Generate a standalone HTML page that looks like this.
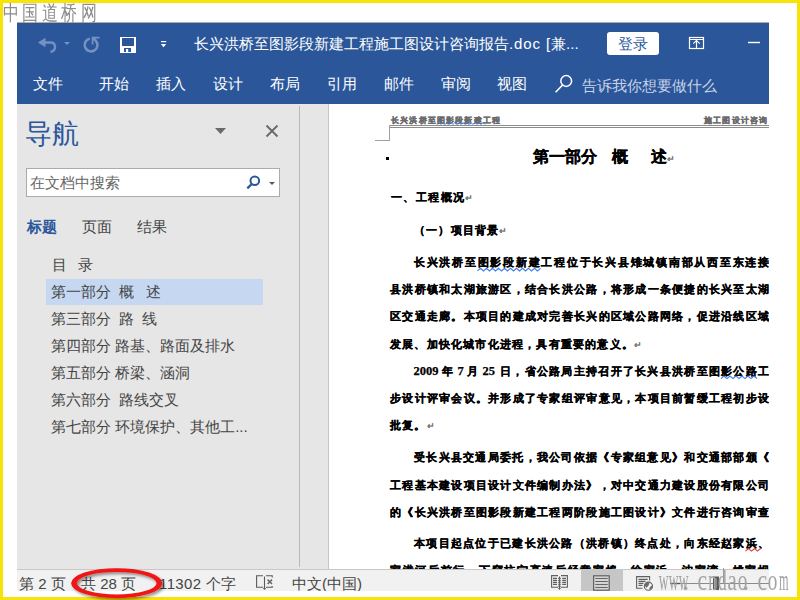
<!DOCTYPE html>
<html><head><meta charset="utf-8">
<style>
*{margin:0;padding:0;box-sizing:border-box}
html,body{width:800px;height:600px;overflow:hidden;background:#fff}
body{position:relative;font-family:"Liberation Sans",sans-serif}
.a{position:absolute;white-space:nowrap}
#yb{position:absolute;left:0;top:0;width:800px;height:600px;border:3px solid #f9e207;z-index:1}
#win{position:absolute;left:17px;top:22px;width:752px;height:569px;overflow:hidden;background:#e6e6e6}
#title{position:absolute;left:0;top:0;width:752px;height:82px;background:#2b579a}
.tb{color:#fff;font-size:15px;line-height:15px;top:54px}
.nav{color:#444;font-size:15px;line-height:15px}
#page{position:absolute;left:312px;top:82px;width:440px;height:465px;background:#fff;overflow:hidden}
.p{position:absolute;white-space:nowrap;font-family:"Liberation Serif",serif;font-weight:bold;font-size:11px;line-height:12px;color:#000;-webkit-text-stroke:0.25px #000}
#status{position:absolute;left:0;top:547px;width:752px;height:22px;background:#f1f1f1;border-top:1px solid #c8c8c8}
.st{color:#444;font-size:15px;line-height:15px;top:6px}
.hd{font-size:8px;line-height:9px;letter-spacing:1.17px;font-weight:bold;color:#6a6a6a;-webkit-text-stroke:0.3px #6a6a6a}
.j{text-align:justify;text-align-last:justify}
.rm{font-family:"Liberation Sans",sans-serif;font-weight:normal;color:#a0a0a0;font-size:9px}
</style></head><body>
<div id="yb"></div>
<div class="a" style="left:0;top:1.5px;width:110px;height:22px;font-size:18px;line-height:18px;color:#8c8c8c;z-index:2"><span style="position:absolute;left:1.5px;top:0;width:18px;text-align:center;transform:scale(0.9,1.18);transform-origin:50% 0">中</span><span style="position:absolute;left:20.5px;top:0;width:18px;text-align:center;transform:scale(0.9,1.18);transform-origin:50% 0">国</span><span style="position:absolute;left:40.5px;top:0;width:18px;text-align:center;transform:scale(0.9,1.18);transform-origin:50% 0">道</span><span style="position:absolute;left:60.0px;top:0;width:18px;text-align:center;transform:scale(0.9,1.18);transform-origin:50% 0">桥</span><span style="position:absolute;left:80.0px;top:0;width:18px;text-align:center;transform:scale(0.9,1.18);transform-origin:50% 0">网</span></div>

<div id="win">
 <div id="title">
  <div class="a" style="left:0;top:0;width:752px;height:1px;background:#b3aca5"></div>
  <div class="a" style="left:177px;top:14px;color:#fff;font-size:15px;line-height:15px">长兴洪桥至图影段新建工程施工图设计咨询报告<span style="letter-spacing:0.9px">.doc [</span>兼...</div>
  <div class="a" style="left:590px;top:10px;width:52px;height:23px;background:#fff;border-radius:3px;color:#2b579a;font-size:15px;line-height:23px;text-align:center">登录</div>
  <div class="a tb" style="left:16px">文件</div>
  <div class="a tb" style="left:82px">开始</div>
  <div class="a tb" style="left:139px">插入</div>
  <div class="a tb" style="left:196px">设计</div>
  <div class="a tb" style="left:253px">布局</div>
  <div class="a tb" style="left:310px">引用</div>
  <div class="a tb" style="left:367px">邮件</div>
  <div class="a tb" style="left:424px">审阅</div>
  <div class="a tb" style="left:480px">视图</div>
  <div class="a tb" style="left:564.5px;top:55.5px;color:#c9d3e6">告诉我你想要做什么</div>
 </div>

 <!-- nav pane -->
 <div class="a" style="left:8px;top:99px;font-size:27px;line-height:27px;color:#2b579a">导航</div>
 <div class="a" style="left:9px;top:146px;width:254px;height:29px;background:#fff;border:1px solid #ababab"></div>
 <div class="a" style="left:13px;top:153px;font-size:15px;line-height:15px;color:#666">在文档中搜索</div>
 <div class="a nav" style="left:10px;top:197px;color:#2b579a;font-weight:bold">标题</div>
 <div class="a nav" style="left:65px;top:197px">页面</div>
 <div class="a nav" style="left:120px;top:197px">结果</div>
 <div class="a" style="left:29px;top:257px;width:217px;height:26px;background:#c5d7f1"></div>
 <div class="a nav" style="left:35px;top:235px">目</div><div class="a nav" style="left:61px;top:235px">录</div>
 <div class="a nav" style="left:34px;top:262px">第一部分</div><div class="a nav" style="left:102px;top:262px">概</div><div class="a nav" style="left:129px;top:262px">述</div>
 <div class="a nav" style="left:34px;top:289px">第三部分</div><div class="a nav" style="left:102px;top:289px">路</div><div class="a nav" style="left:125px;top:289px">线</div>
 <div class="a nav" style="left:34px;top:316px">第四部分 路基、路面及排水</div>
 <div class="a nav" style="left:34px;top:343px">第五部分 桥梁、涵洞</div>
 <div class="a nav" style="left:34px;top:370px">第六部分&nbsp; 路线交叉</div>
 <div class="a nav" style="left:34px;top:397px">第七部分 环境保护、其他工...</div>
 <div class="a" style="left:282px;top:84px;width:1px;height:461px;background:#b9b9b9"></div>
 <div class="a" style="left:311px;top:82px;width:1px;height:465px;background:#c6c6c6"></div>


 <div id="page">
  <div class="a hd" style="left:62px;top:12px">长兴洪桥至图影段新建工程</div>
  <div class="a hd" style="left:375px;top:12px;letter-spacing:1.2px">施工图设计咨询</div>
  <div class="a" style="left:60px;top:21px;width:380px;height:1px;background:#8c8c8c"></div>
  <div class="a" style="left:60px;top:23px;width:380px;height:1px;background:#8c8c8c"></div>
  <div class="a" style="left:60px;top:21px;width:1px;height:15px;background:#a0a0a0"></div>
  <div class="a" style="left:46px;top:36px;width:15px;height:1px;background:#a0a0a0"></div>
  <div class="a" style="left:57px;top:53px;width:3px;height:3px;background:#000"></div>
  <div class="p" style="left:204px;top:45px;font-size:16px;line-height:16px">第一部分</div><div class="p" style="left:283px;top:45px;font-size:16px;line-height:16px">概</div><div class="p" style="left:321.5px;top:45px;font-size:16px;line-height:16px">述<span class="rm">↵</span></div>
  <div class="p" style="left:62px;top:86.5px;letter-spacing:1.4px">一、工程概况<span class="rm">↵</span></div>
  <div class="p" style="left:85px;top:119.5px;letter-spacing:1.2px">（一）项目背景<span class="rm">↵</span></div>
  <div class="p j" style="left:85px;top:152px;width:355px">长兴洪桥至图影段新建工程位于长兴县雉城镇南部从西至东连接</div>
  <div class="p j" style="left:61px;top:179px;width:379px">县洪桥镇和太湖旅游区，结合长洪公路，将形成一条便捷的长兴至太湖</div>
  <div class="p j" style="left:61px;top:206px;width:379px">区交通走廊。本项目的建成对完善长兴的区域公路网络，促进沿线区域</div>
  <div class="p" style="left:61px;top:234px;letter-spacing:1.2px">发展、加快化城市化进程，具有重要的意义。<span class="rm">↵</span></div>
  <div class="p" style="left:84.5px;top:261px;font-size:12.5px">2009</div><div class="p" style="left:113px;top:261px">年</div><div class="p" style="left:128.5px;top:261px;font-size:12.5px">7</div><div class="p" style="left:138px;top:261px">月</div><div class="p" style="left:153.5px;top:261px;font-size:12.5px">25</div><div class="p j" style="left:171px;top:261px;width:269px">日，省公路局主持召开了长兴县洪桥至图影公路工</div>
  <div class="p j" style="left:61px;top:288px;width:379px">步设计评审会议。并形成了专家组评审意见，本项目前暂缓工程初步设</div>
  <div class="p" style="left:61px;top:315px;letter-spacing:1.2px">批复。<span class="rm">↵</span></div>
  <div class="p j" style="left:85px;top:347px;width:355px">受长兴县交通局委托，我公司依据《专家组意见》和交通部部颁《</div>
  <div class="p j" style="left:61px;top:375px;width:379px">工程基本建设项目设计文件编制办法》，对中交通力建设股份有限公司</div>
  <div class="p j" style="left:61px;top:402px;width:379px">的《长兴洪桥至图影段新建工程两阶段施工图设计》文件进行咨询审查</div>
  <div class="p j" style="left:85px;top:433px;width:355px">本项目起点位于已建长洪公路（洪桥镇）终点处，向东经赵家浜、</div>
  <div class="p j" style="left:61px;top:460px;width:379px">家港河后前行，下穿杭宁高速后经章家埠、徐家浜、沈家湾、姚家坝</div>
 </div>

 <div id="status">
  <div class="a st" style="left:2px">第 2 页</div>
  <div class="a st" style="left:64px">共 28 页</div>
  <div class="a st" style="left:142px"><span style="letter-spacing:0.4px">11302</span> 个字</div>
  <div class="a st" style="left:275px">中文(中国)</div>
  <div class="a" style="left:564px;top:0;width:42px;height:21px;background:#c6c6c6"></div>
 </div>
</div>

<svg id="ov" width="800" height="600" viewBox="0 0 800 600" style="position:absolute;left:0;top:0;z-index:3">
 <!-- QAT undo -->
 <g fill="none" stroke="#7391c3" stroke-width="2.4">
  <path d="M39.5 42.5 H50.5 Q55 42.5 55 47 Q55 51 50.5 52"/>
 </g>
 <path d="M38 42.5 L45.5 37.8 L45.5 47.2 Z" fill="#7391c3"/>
 <path d="M64 42 H70 L67 45 Z" fill="#7391c3"/>
 <!-- redo -->
 <path d="M89.9 38.7 A6.4 6.4 0 1 0 95.7 40.6 L93 37.8" fill="none" stroke="#7391c3" stroke-width="2.6"/>
 <path d="M99.6 37.6 H92.6 V44.6" fill="none" stroke="#7391c3" stroke-width="1.8"/>
 <!-- save -->
 <path d="M120 37 H136 V53 H120 Z M122 38 V46 H134 V38 Z M124 48 V52 H131 V48 Z" fill="#fff" fill-rule="evenodd"/>
 <rect x="122" y="46" width="12" height="6" fill="#eeeeee" opacity="0"/>
 <path d="M126 49 H128.2 V52 H126 Z" fill="#fff"/>
 <!-- customize -->
 <rect x="161" y="41" width="5.2" height="1.2" fill="#fff"/>
 <path d="M160.9 44 H166.2 L163.55 47.2 Z" fill="#fff"/>
 <!-- ribbon display options -->
 <g fill="none" stroke="#fff" stroke-width="1.2">
  <rect x="689.5" y="37.5" width="14" height="11"/>
  <path d="M689.6 39.5 H703.4 M696.5 39.5 V48.4"/>
  <path d="M693.2 43.7 L696.5 40.6 L699.8 43.7" stroke-width="1.1"/>
 </g>
 <rect x="748" y="41.8" width="12" height="1.4" fill="#fff"/>
 <!-- ribbon search -->
 <circle cx="566.2" cy="81" r="5.4" fill="none" stroke="#fff" stroke-width="1.5"/>
 <path d="M562.6 85 L555.6 92.3" stroke="#fff" stroke-width="1.6"/>
 <!-- nav triangle and X -->
 <path d="M215 128 H226 L220.5 134 Z" fill="#6a6a6a"/>
 <path d="M266.5 125.5 L277.5 136.5 M277.5 125.5 L266.5 136.5" stroke="#6a6a6a" stroke-width="1.9"/>
 <!-- nav search -->
 <circle cx="254.8" cy="180.8" r="4.3" fill="none" stroke="#2b579a" stroke-width="2"/>
 <path d="M251.5 184.2 L247.3 188.4" stroke="#2b579a" stroke-width="2.3"/>
 <path d="M269 182 H275 L272 185 Z" fill="#5a5a5a"/>
 <!-- status proofing icon -->
 <g fill="none" stroke="#595959" stroke-width="1.1">
  <path d="M263 575.7 H256.6 V587.3 H263"/>
  <path d="M266 575.7 H272.2 V577.5 M272.2 586 V587.3 H266"/>
  <path d="M264.5 576.5 V589"/>
  <path d="M267.6 579.6 L272 584 M272 579.6 L267.6 584" stroke-width="1.5" stroke="#666"/>
 </g>
 <path d="M262.8 588 H266.2 L264.5 590 Z" fill="#595959"/>
 <!-- read mode -->
 <g fill="none" stroke="#5f5f5f" stroke-width="1.1">
  <path d="M558 575.6 H551.6 V587.3 H558 M561 575.6 H567.4 V587.3 H561"/>
  <path d="M559.5 576.5 V589"/>
  <path d="M553 578.4 H557 M553 580.4 H557 M553 582.4 H557 M553 584.4 H557 M562.2 578.4 H566 M562.2 580.4 H566 M562.2 582.4 H566 M562.2 584.4 H566 M558.3 578.4 H560.7 M558.3 580.4 H560.7 M558.3 582.4 H560.7 M558.3 584.4 H560.7 M558.3 586.4 H560.7"/>
 </g>
 <path d="M558 588 H561 L559.5 590 Z" fill="#5f5f5f"/>
 <!-- print layout -->
 <rect x="593.6" y="575.8" width="15.6" height="14.4" fill="#d4d4d4" stroke="#616161" stroke-width="1.2"/>
 <path d="M595.3 578.5 H607.7 M595.3 581.5 H607.7 M595.3 584.5 H607.7 M595.3 587.5 H607.7" stroke="#666" stroke-width="1"/>
 <!-- web layout -->
 <g fill="none" stroke="#5f5f5f" stroke-width="1.1">
  <path d="M649.6 580.5 V576.6 H636.6 V588.2 H642.5"/>
  <path d="M638.5 579.4 H647.7 M638.5 581.4 H645.5 M638.5 583.4 H643.5 M638.5 585.4 H642.5"/>
 </g>
 <circle cx="648.4" cy="586.2" r="4.6" fill="#f1f1f1"/>
 <circle cx="648.4" cy="586.2" r="4.1" fill="#f6f6f6" stroke="#606060" stroke-width="1.1"/>
 <path d="M645 584 Q647 582 649.5 582.6 L648.6 585.6 L646.2 588 Q644.6 586.5 645 584 Z M650.8 586.2 L652.6 585.4 Q652.8 588.4 650 590 L649.2 588.4 Z" fill="#6a6a6a"/>
 <!-- zoom slider -->
 <path d="M670 583.5 H769" stroke="#8a8a8a" stroke-width="1"/><path d="M670 583.5 H680" stroke="#555" stroke-width="1.4"/>
 <rect x="713" y="576.5" width="6" height="13.5" fill="#5a5a5a"/><rect x="715" y="578" width="2" height="10.5" fill="#888"/>
 <path d="M723.5 568 V583" stroke="#9a9a9a" stroke-width="1"/>
 <!-- squiggles -->
 <polyline points="437.0,124.5 439.0,122.5 441.0,124.5 443.0,122.5 445.0,124.5 447.0,122.5 449.0,124.5 451.0,122.5 453.0,124.5 455.0,122.5 457.0,124.5 459.0,122.5 461.0,124.5 463.0,122.5 465.0,124.5 467.0,122.5 469.0,124.5 471.0,122.5 473.0,124.5 475.0,122.5 477.0,124.5 479.0,122.5 481.0,124.5 483.0,122.5 485.0,124.5" fill="none" stroke="#3f7fe6" stroke-width="1"/>
 <polyline points="477.5,270.9 480.5,268.3 483.5,270.9 486.5,268.3 489.5,270.9 492.5,268.3 495.5,270.9 498.5,268.3 501.5,270.9 504.5,268.3 507.5,270.9 510.5,268.3 513.5,270.9 516.5,268.3 519.5,270.9 522.5,268.3 525.5,270.9 528.5,268.3 531.5,270.9 534.5,268.3 537.5,270.9 540.5,268.3" fill="none" stroke="#3f7fe6" stroke-width="1.1"/>
 <polyline points="721.0,378.6 724.0,376.0 727.0,378.6 730.0,376.0 733.0,378.6 736.0,376.0 739.0,378.6 742.0,376.0 745.0,378.6 748.0,376.0 751.0,378.6 754.0,376.0 757.0,378.6" fill="none" stroke="#3f7fe6" stroke-width="1.1"/>
 <polyline points="745.5,551.1 748.5,548.5 751.5,551.1 754.5,548.5 757.5,551.1 760.5,548.5" fill="none" stroke="#e8403a" stroke-width="1.1"/>
 <!-- red ellipse -->
 <defs><filter id="sh" x="-20%" y="-50%" width="140%" height="200%"><feDropShadow dx="1.8" dy="2" stdDeviation="1.6" flood-color="#000" flood-opacity="0.45"/></filter></defs>
 <path d="M71.1 583.2 A45.6 15.0 0 1 0 162.3 583.2 A45.6 15.0 0 1 0 71.1 583.2 Z M76.80000000000001 583.2 A39.9 11.2 0 1 0 156.6 583.2 A39.9 11.2 0 1 0 76.80000000000001 583.2 Z" fill="#f01414" fill-rule="evenodd" filter="url(#sh)"/>
</svg>
<div class="a" style="left:0;top:565.2px;width:800px;height:30px;z-index:4;font-family:'Liberation Serif',serif;font-size:30px;line-height:30px;color:#a3a3a3"><span style="position:absolute;left:655.5px;width:10px;text-align:center;transform:scaleX(0.45)">w</span><span style="position:absolute;left:665.5px;width:10px;text-align:center;transform:scaleX(0.45)">w</span><span style="position:absolute;left:675.5px;width:10px;text-align:center;transform:scaleX(0.45)">w</span><span style="position:absolute;left:680.5px;width:10px;text-align:center">.</span><span style="position:absolute;left:695.5px;width:10px;text-align:center;transform:scaleX(0.72)">c</span><span style="position:absolute;left:705.5px;width:10px;text-align:center;transform:scaleX(0.55)">n</span><span style="position:absolute;left:715.5px;width:10px;text-align:center;transform:scaleX(0.58)">d</span><span style="position:absolute;left:725.5px;width:10px;text-align:center;transform:scaleX(0.7)">a</span><span style="position:absolute;left:735.5px;width:10px;text-align:center;transform:scaleX(0.64)">o</span><span style="position:absolute;left:740.5px;width:10px;text-align:center">.</span><span style="position:absolute;left:755.5px;width:10px;text-align:center;transform:scaleX(0.72)">c</span><span style="position:absolute;left:765.5px;width:10px;text-align:center;transform:scaleX(0.64)">o</span><span style="position:absolute;left:775.5px;width:10px;text-align:center;transform:scaleX(0.41)">m</span></div>
</body></html>
